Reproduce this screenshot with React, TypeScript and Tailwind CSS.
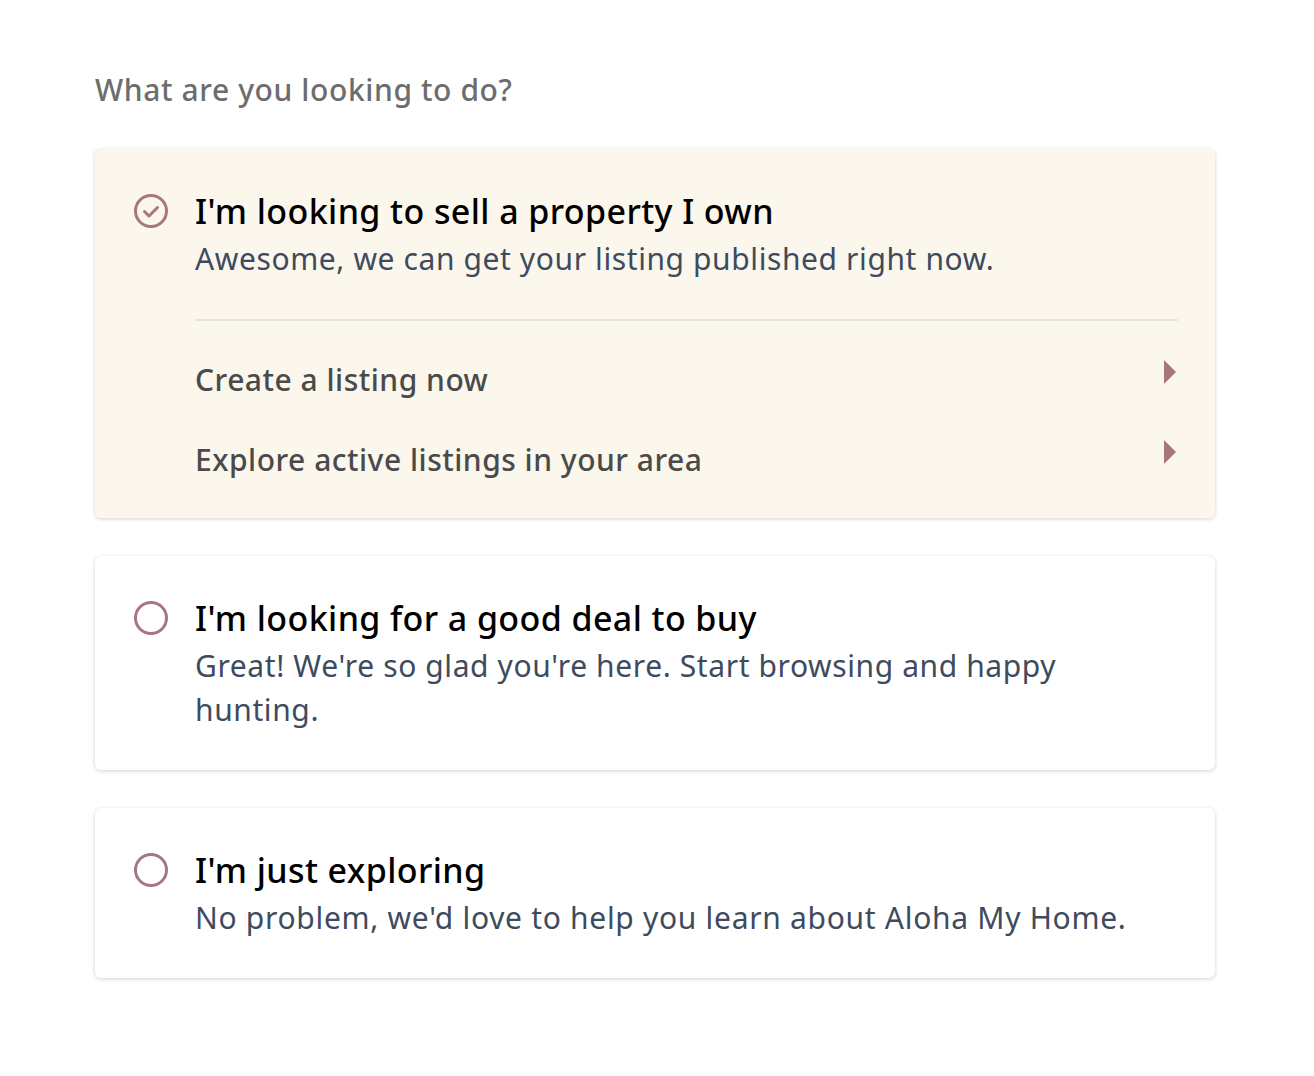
import React from "react";

const font = { fontFamily: "'Noto Sans', Lato, sans-serif" };

function CheckCircle() {
  return (
    <svg width="36" height="36" viewBox="0 0 36 36" className="shrink-0">
      <circle cx="18" cy="18" r="15.5" fill="none" stroke="#a8767f" strokeWidth="3" />
      <path d="M11.5 18.5 L16 23 L24.5 14.5" fill="none" stroke="#a8767f" strokeWidth="3" strokeLinecap="round" strokeLinejoin="round" />
    </svg>
  );
}

function EmptyCircle() {
  return (
    <svg width="36" height="36" viewBox="0 0 36 36" className="shrink-0">
      <circle cx="18" cy="18" r="15.5" fill="none" stroke="#a8767f" strokeWidth="3" />
    </svg>
  );
}

function Caret() {
  return (
    <svg width="12" height="24" viewBox="0 0 12 24">
      <path d="M0 0 L12 12 L0 24 Z" fill="#a8767f" />
    </svg>
  );
}

export default function App() {
  return (
    <div className="min-h-[1076px] w-full bg-white" style={font}>
      <div className="w-[1120px] ml-[95px] pt-[70px]">
        <h2 className="text-[30px] leading-[40px] tracking-[0.6px] font-medium text-[#6d6d6d]">What are you looking to do?</h2>

        <div className="mt-[39px] flex flex-col gap-[38px]">
          {/* Card 1 */}
          <div className="rounded-[6px] bg-[#fbf7ed] shadow-[0_1px_4px_rgba(0,0,0,0.18)] pl-[38px] pr-[37px] pt-[38px] pb-[19px]">
            <div className="flex items-start gap-[26px]">
              <div className="mt-[6px]"><CheckCircle /></div>
              <div className="flex-1">
                <div className="text-[34px] leading-[48px] tracking-[0.4px] font-medium text-black">I'm looking to sell a property I own</div>
                <div className="mt-[2px] text-[30px] leading-[44px] tracking-[0.6px] text-[#3e4b5e]">Awesome, we can get your listing published right now.</div>
                <div className="mt-[38px] h-[2px] bg-[#e4e4e4]" />
                <div className="pt-[18px]">
                  <div className="h-[80px] flex items-center justify-between">
                    <span className="text-[30px] tracking-[0.5px] font-medium text-[#4a4a4a]">Create a listing now</span>
                    <span className="mr-[2px] -mt-[14px]"><Caret /></span>
                  </div>
                  <div className="h-[80px] flex items-center justify-between">
                    <span className="text-[30px] tracking-[0.5px] font-medium text-[#4a4a4a]">Explore active listings in your area</span>
                    <span className="mr-[2px] -mt-[14px]"><Caret /></span>
                  </div>
                </div>
              </div>
            </div>
          </div>

          {/* Card 2 */}
          <div className="rounded-[6px] bg-white shadow-[0_1px_4px_rgba(0,0,0,0.18)] pl-[38px] pr-[37px] pt-[38px] pb-[38px]">
            <div className="flex items-start gap-[26px]">
              <div className="mt-[6px]"><EmptyCircle /></div>
              <div className="flex-1">
                <div className="text-[34px] leading-[48px] tracking-[0.4px] font-medium text-black">I'm looking for a good deal to buy</div>
                <div className="mt-[2px] text-[30px] leading-[44px] tracking-[0.6px] text-[#3e4b5e]">Great! We're so glad you're here. Start browsing and happy hunting.</div>
              </div>
            </div>
          </div>

          {/* Card 3 */}
          <div className="rounded-[6px] bg-white shadow-[0_1px_4px_rgba(0,0,0,0.18)] pl-[38px] pr-[37px] pt-[38px] pb-[38px]">
            <div className="flex items-start gap-[26px]">
              <div className="mt-[6px]"><EmptyCircle /></div>
              <div className="flex-1">
                <div className="text-[34px] leading-[48px] tracking-[0.4px] font-medium text-black">I'm just exploring</div>
                <div className="mt-[2px] text-[30px] leading-[44px] tracking-[0.7px] text-[#3e4b5e]">No problem, we'd love to help you learn about Aloha My Home.</div>
              </div>
            </div>
          </div>
        </div>
      </div>
    </div>
  );
}
